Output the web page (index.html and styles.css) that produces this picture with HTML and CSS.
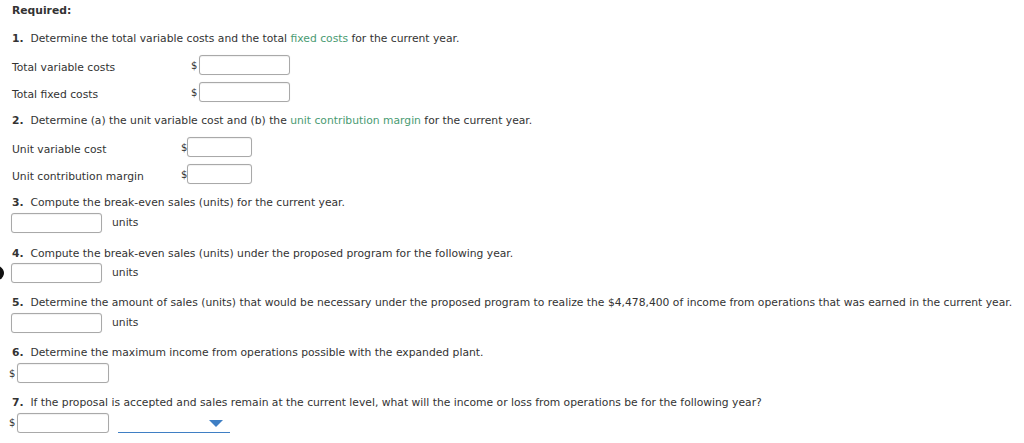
FILE: index.html
```html
<!DOCTYPE html>
<html>
<head>
<meta charset="utf-8">
<link rel="stylesheet" href="styles.css">
</head>
<body>
<div class="page">
  <div class="req">Required:</div>

  <div class="q q1"><b>1.</b>&nbsp; Determine the total variable costs and the total <span class="lnk">fixed costs</span> for the current year.</div>
  <div class="grid g1">
    <div class="lbl">Total variable costs</div><div class="dol">$</div><div class="box w91"></div>
    <div class="lbl">Total fixed costs</div><div class="dol">$</div><div class="box w91"></div>
  </div>

  <div class="q q2"><b>2.</b>&nbsp; Determine (a) the unit variable cost and (b) the <span class="lnk">unit contribution margin</span> for the current year.</div>
  <div class="grid g2">
    <div class="lbl">Unit variable cost</div><div class="dol">$</div><div class="box w65"></div>
    <div class="lbl">Unit contribution margin</div><div class="dol">$</div><div class="box w65"></div>
  </div>

  <div class="q q3"><b>3.</b>&nbsp; Compute the break-even sales (units) for the current year.</div>
  <div class="urow"><div class="box w91"></div><span class="units">units</span></div>

  <div class="q q4"><b>4.</b>&nbsp; Compute the break-even sales (units) under the proposed program for the following year.</div>
  <div class="urow focus"><div class="box w91"></div><span class="units">units</span></div>

  <div class="q q5"><b>5.</b>&nbsp; Determine the amount of sales (units) that would be necessary under the proposed program to realize the $4,478,400 of income from operations that was earned in the current year.</div>
  <div class="urow"><div class="box w91"></div><span class="units">units</span></div>

  <div class="q q6"><b>6.</b>&nbsp; Determine the maximum income from operations possible with the expanded plant.</div>
  <div class="drow"><span class="dol2">$</span><div class="box w92"></div></div>

  <div class="q q7"><b>7.</b>&nbsp; If the proposal is accepted and sales remain at the current level, what will the income or loss from operations be for the following year?</div>
  <div class="drow d7"><span class="dol2">$</span><div class="box w92"></div>
    <div class="select"><svg class="arrow" width="14" height="7" viewBox="0 0 14 7"><path d="M0 0 H14 L7 7 Z" fill="#3f7fc4"/></svg></div>
  </div>
</div>
</body>
</html>
```

FILE: styles.css
```css
html, body {
  margin: 0;
  padding: 0;
  background: #fff;
}
body {
  font-family: "DejaVu Sans", Verdana, sans-serif;
  font-size: 10.75px;
  color: #333;
}
.page {
  padding: 3px 0 0 12px;
  width: 1012px;
  white-space: nowrap;
}
.req {
  font-weight: bold;
  line-height: 16px;
  height: 16px;
}
.q {
  line-height: 16px;
  height: 16px;
}
.q b { font-weight: bold; }
.lnk { color: #4a9b72; }
.q1 { margin-top: 12px; }
.q2 { margin-top: 11px; }
.q3 { margin-top: 11px; }
.q4 { margin-top: 13px; }
.q5 { margin-top: 12px; }
.q6 { margin-top: 12px; }
.q7 { margin-top: 12px; }

.grid {
  display: grid;
  row-gap: 7px;
  align-items: center;
  margin-top: 8px;
}
.g1 { grid-template-columns: 179px 8px 91px; }
.g2 { grid-template-columns: 169px 6px 65px; }
.lbl {
  line-height: 20px;
  margin-top: 3px;
  margin-bottom: -3px;
}
.dol { font-size: 10px; }

.box {
  box-sizing: border-box;
  height: 20px;
  border: 1px solid #a9a9a9;
  border-radius: 3px;
  box-shadow: inset 0 1px 1px rgba(0,0,0,0.06), 0 0 1px rgba(0,0,0,0.15);
  background: #fff;
}
.w91 { width: 91px; }
.w65 { width: 65px; }
.w92 { width: 92px; }

.urow {
  display: flex;
  align-items: center;
  gap: 10px;
  margin: 2px 0 0 -1px;
  position: relative;
}
.q4 + .urow { margin-top: 1px; }
.units { line-height: 20px; }
.focus::before {
  content: "";
  position: absolute;
  left: -39px;
  top: 0;
  width: 32px;
  height: 20px;
  border-radius: 50%;
  background: #111;
}
.drow {
  display: flex;
  align-items: center;
  margin: 2px 0 0 -3px;
}
.d7 { margin-top: 1px; }
.dol2 { font-size: 10px; width: 8px; }
.select {
  margin-left: 9px;
  width: 112px;
  height: 20px;
  border-bottom: 1px solid #3f7fc4;
  position: relative;
}
.arrow {
  position: absolute;
  right: 7px;
  top: 8px;
}
```
